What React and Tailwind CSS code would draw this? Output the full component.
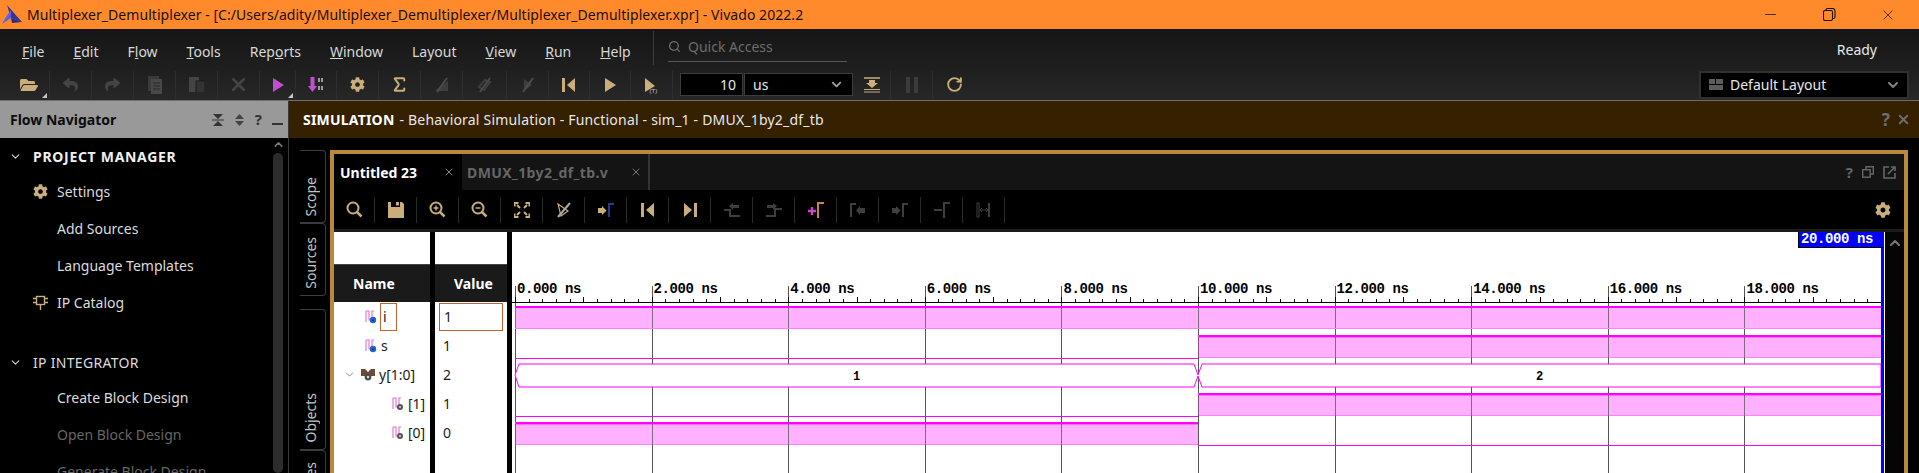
import React from 'react';
import { FaCog, FaFolderOpen, FaReply, FaShare } from 'react-icons/fa';
import { X, ChevronDown, ChevronUp, Sigma, RotateCw, Search, Minus } from 'lucide-react';

const TAN = '#c9ae7c';
const DIM = '#444444';

const NS = 68.3;
const X0 = 3; // 0 ns inside the wave svg
const xAt = ns => X0 + ns * NS;

/* ---------- toolbar drawings ---------- */

const Tri = ({ dir = 'right', color = TAN, size = 16 }) => (
  <svg width={size} height={size} viewBox="0 0 16 16">
    <polygon points={dir === 'right' ? '3,1 14,8 3,15' : '13,1 2,8 13,15'} fill={color} />
  </svg>
);

const StepBack = ({ color = TAN }) => (
  <svg width="16" height="16" viewBox="0 0 16 16">
    <rect x="1" y="1" width="3" height="14" fill={color} />
    <polygon points="14,1 6,8 14,15" fill={color} />
  </svg>
);

const StepNext = ({ color = TAN }) => (
  <svg width="16" height="16" viewBox="0 0 16 16">
    <polygon points="2,1 10,8 2,15" fill={color} />
    <rect x="12" y="1" width="3" height="14" fill={color} />
  </svg>
);

const CopyIcon = () => (
  <svg width="16" height="18" viewBox="0 0 16 18">
    <rect x="1" y="0" width="11" height="15" fill="#3a3a3a" />
    <rect x="4" y="3" width="11" height="15" fill="#484848" />
    <path d="M6 7h7M6 10h7M6 13h7" stroke="#2a2a2a" />
  </svg>
);

const PasteIcon = () => (
  <svg width="16" height="16" viewBox="0 0 16 16">
    <rect x="0" y="0" width="10" height="15" fill="#444" />
    <rect x="7" y="4" width="9" height="12" fill="#333" stroke="#1c1c1c" />
  </svg>
);

const DownBits = () => (
  <svg width="16" height="16" viewBox="0 0 16 16">
    <rect x="2.5" y="0" width="4" height="9" fill="#c04fd0" />
    <polygon points="0,9 9,9 4.5,15" fill="#c04fd0" />
    <path d="M11 1v4M14 1v4M11 9v4M14 9v4" stroke="#9a9a9a" strokeWidth="2" />
  </svg>
);

const Slashed = ({ kind = 'a' }) => (
  <svg width="18" height="18" viewBox="0 0 18 18">
    {kind === 'a' && <polygon points="2,15 15,15 15,5" fill="#3e3e3e" />}
    {kind === 'b' && <path d="M3 11l6-7 5 2-6 8z" fill="none" stroke="#3e3e3e" strokeWidth="2" />}
    {kind === 'c' && <path d="M5 3l8 6-8 6z" fill="#3e3e3e" />}
    <path d="M14 2L4 16" stroke="#4c4c4c" strokeWidth="2" />
  </svg>
);

const PlayTimed = () => (
  <div className="relative w-[16px] h-[16px]">
    <svg width="12" height="16" viewBox="0 0 12 16">
      <polygon points="1,1 11,9 1,15" fill={TAN} />
    </svg>
    <span className="absolute left-[6px] top-[10px] text-[6px] leading-[8px] text-[#c8c8c8] font-['Liberation_Sans',sans-serif]">(T)</span>
  </div>
);

const LoadIcon = () => (
  <svg width="16" height="16" viewBox="0 0 16 16">
    <path d="M0 1h16" stroke={TAN} strokeWidth="1.5" />
    <polygon points="5,3 11,3 11,6 14,6 8,11 2,6 5,6" fill={TAN} />
    <path d="M0 12.5h16M0 15h16" stroke={TAN} strokeWidth="1.2" />
  </svg>
);

const PauseIcon = () => (
  <svg width="12" height="16" viewBox="0 0 12 16">
    <rect x="0" y="0" width="4" height="16" fill="#3c3c3c" />
    <rect x="8" y="0" width="4" height="16" fill="#3c3c3c" />
  </svg>
);

const Corner = ({ children }) => (
  <div className="relative w-full h-full flex items-center justify-center">
    {children}
    <span className="absolute right-[2px] bottom-[1px] w-0 h-0 border-l-[5px] border-l-transparent border-b-[5px] border-b-[#c8c8c8]" />
  </div>
);

/* wave toolbar drawings */

const Magnifier = ({ mark }) => (
  <svg width="17" height="17" viewBox="0 0 17 17" fill="none" stroke={TAN}>
    <circle cx="7" cy="7" r="5.5" strokeWidth="2" />
    <path d="M11 11l4.5 4.5" strokeWidth="2.5" />
    {mark && <path d="M4.5 7h5" strokeWidth="1.5" />}
    {mark === 'plus' && <path d="M7 4.5v5" strokeWidth="1.5" />}
  </svg>
);

const SaveIcon = () => (
  <svg width="16" height="16" viewBox="0 0 16 16">
    <path d="M0 0h3v5h9V0h2l2 2v14H0z" fill={TAN} />
    <rect x="8" y="0" width="3" height="3.5" fill={TAN} />
  </svg>
);

const FitIcon = () => (
  <svg width="16" height="16" viewBox="0 0 16 16" fill="none" stroke={TAN} strokeWidth="2">
    <path d="M0.5 4.5V1h4M15.5 4.5V1h-4M0.5 11.5V15h4M15.5 11.5V15h-4" />
    <path d="M3 3l3 3M13 3l-3 3M3 13l3-3M13 13l-3-3" />
  </svg>
);

const CursorSlash = () => (
  <svg width="16" height="16" viewBox="0 0 16 16">
    <path d="M2 2l10 7-7 5z" fill="none" stroke={TAN} strokeWidth="1.2" />
    <path d="M14 1L2 15" stroke="#aaaaaa" strokeWidth="2" />
  </svg>
);

// arrow running into a rising edge; flip puts the edge first
const EdgeArrow = ({ color = TAN, bar = '#1f3a93', flip }) => (
  <svg width="16" height="14" viewBox="0 0 16 14">
    {flip ? (
      <>
        <path d="M1 14V1h5" fill="none" stroke={bar} strokeWidth="2" />
        <polygon points="6,7.5 10,3 10,5 15,5 15,10 10,10 10,12" fill={color} />
      </>
    ) : (
      <>
        <path d="M11 14V1h5" fill="none" stroke={bar} strokeWidth="2" />
        <polygon points="0,5 4,5 4,3 8.5,7.5 4,12 4,10 0,10" fill={color} />
      </>
    )}
  </svg>
);

const TransLeft = () => (
  <svg width="16" height="14" viewBox="0 0 16 14">
    <path d="M0 7h6v6h10" fill="none" stroke="#3e3e3e" strokeWidth="2" />
    <polygon points="5,3 9,0 9,2 15,2 15,5 9,5 9,7" fill="#3e3e3e" />
  </svg>
);

const TransRight = () => (
  <svg width="16" height="14" viewBox="0 0 16 14">
    <path d="M0 13h9V6h7" fill="none" stroke="#3e3e3e" strokeWidth="2" />
    <polygon points="11,3 7,0 7,2 1,2 1,5 7,5 7,7" fill="#3e3e3e" />
  </svg>
);

const AddMarker = () => (
  <svg width="16" height="16" viewBox="0 0 16 16">
    <path d="M0 9h8M4 5v8" stroke="#cc44cc" strokeWidth="2.4" />
    <path d="M10 16V1h6" fill="none" stroke="#c9824c" strokeWidth="2" />
  </svg>
);

const DashMarker = () => (
  <svg width="16" height="16" viewBox="0 0 16 16">
    <path d="M10 16V1h6" fill="none" stroke="#3e3e3e" strokeWidth="2" />
    <path d="M0 8h8" stroke="#3e3e3e" strokeWidth="2" />
  </svg>
);

const SwapMarker = () => (
  <svg width="16" height="16" viewBox="0 0 16 16" fill="none" stroke="#3e3e3e">
    <rect x="1" y="1" width="2" height="14" />
    <path d="M13 1v14" strokeWidth="2" />
    <path d="M4 8h8" />
    <path d="M6 6L4 8l2 2M10 6l2 2-2 2" />
  </svg>
);

/* signal icons in the name column */

const SignalIcon = ({ dot = '#2563c9', small }) => (
  <svg width="12" height="14" viewBox="0 0 12 14" className="shrink-0">
    <path d="M1 12V1M1 1h3v9h3V1h2" fill="none" stroke="#e070c8" strokeWidth="1.1" />
    <circle cx="8" cy="10" r={small ? 3 : 3.2} fill={dot} />
    {!small && <path d="M7 9.5l1 1.5 1-1.5" stroke="#0b2a66" fill="none" strokeWidth="0.8" />}
    {small && <circle cx="8" cy="10" r="1" fill="#dddddd" />}
  </svg>
);

const BusIcon = () => (
  <svg width="14" height="14" viewBox="0 0 14 14" className="shrink-0">
    <polygon points="0,1 4,1 7,4 10,1 14,1 14,8 0,8" fill="#6b4a38" />
    <circle cx="7" cy="9" r="3.4" fill="#4c4c4c" />
    <circle cx="7" cy="9" r="1.2" fill="#dddddd" />
  </svg>
);

const Logo = () => (
  <svg width="20" height="20" viewBox="0 0 20 20">
    <polygon points="5,0 12,8 20,17 9,13" fill="#3a3196" />
    <polygon points="9,5 9,13 0,19 4,12" fill="#5b5fe0" />
    <polygon points="9,13 20,17 10,18" fill="#2a2a86" />
  </svg>
);

const GearIcon = ({ size = 15 }) => <FaCog size={size} color={TAN} />;

const IpIcon = () => (
  <svg width="15" height="15" viewBox="0 0 15 15" fill="none" stroke={TAN} strokeWidth="1.4">
    <rect x="3.5" y="1.5" width="8" height="8" />
    <path d="M0 3.5h3.5M0 7.5h3.5M11.5 3.5H15M11.5 7.5H15M7.5 9.5V15" />
  </svg>
);

/* ---------- data ---------- */

const MENU = [
  ['F', 'ile'], ['E', 'dit'], ['Fl', 'ow', 1], ['T', 'ools'], ['Rep', 'orts', 2], ['W', 'indow'],
  ['', 'Layout'], ['V', 'iew'], ['R', 'un'], ['H', 'elp'],
];

const MAIN_TOOLS = [
  { w: 'w-[42px]', el: <Corner><FaFolderOpen size={18} color={TAN} /></Corner> },
  { w: 'w-[42px]', el: <FaReply size={15} color={DIM} /> },
  { w: 'w-[42px]', el: <FaShare size={15} color={DIM} /> },
  { w: 'w-[42px]', el: <CopyIcon /> },
  { w: 'w-[42px]', el: <PasteIcon /> },
  { w: 'w-[42px]', el: <X size={21} color={DIM} strokeWidth={3} /> },
  { w: 'w-[36px]', el: <Corner><Tri color="#c04fd0" /></Corner> },
  { w: 'w-[41px]', el: <DownBits /> },
  { w: 'w-[42px]', el: <FaCog size={15} color={TAN} /> },
  { w: 'w-[42px]', el: <Sigma size={19} color={TAN} strokeWidth={2.5} /> },
  { w: 'w-[42px]', el: <Slashed kind="a" /> },
  { w: 'w-[44px]', el: <Slashed kind="b" /> },
  { w: 'w-[42px]', el: <Slashed kind="c" /> },
  { w: 'w-[41px]', el: <StepBack /> },
  { w: 'w-[41px]', el: <Tri /> },
  { w: 'w-[42px]', el: <PlayTimed /> },
];

const WAVE_TOOLS = [
  <Magnifier />, <SaveIcon />, <Magnifier mark="plus" />, <Magnifier mark="minus" />, <FitIcon />, <CursorSlash />,
  <EdgeArrow />, <StepBack />, <StepNext />, <TransLeft />, <TransRight />, <AddMarker />,
  <EdgeArrow color="#3e3e3e" bar="#3e3e3e" flip />, <EdgeArrow color="#3e3e3e" bar="#3e3e3e" />, <DashMarker />, <SwapMarker />,
];

const NAV = [
  { label: 'PROJECT MANAGER', head: true, bold: true },
  { label: 'Settings', icon: <GearIcon /> },
  { label: 'Add Sources' },
  { label: 'Language Templates' },
  { label: 'IP Catalog', icon: <IpIcon /> },
  { spacer: true },
  { label: 'IP INTEGRATOR', head: true },
  { label: 'Create Block Design' },
  { label: 'Open Block Design', off: true },
  { label: 'Generate Block Design', off: true },
];

const SIDE_TABS = [
  { label: 'Scope', box: 'h-[73px]' },
  { label: 'Sources', box: 'h-[73px]' },
  { label: 'Objects', box: 'h-[141px] mt-[13px]' },
  { label: 'Protocol Instances', box: 'h-[140px]' },
];

const ROWS = [
  { name: 'i', value: '1', pad: 'pl-[31px]', icon: <SignalIcon />, selected: true },
  { name: 's', value: '1', pad: 'pl-[31px]', icon: <SignalIcon /> },
  { name: 'y[1:0]', value: '2', pad: 'pl-[9px]', chevron: true, icon: <BusIcon /> },
  { name: '[1]', value: '1', pad: 'pl-[58px]', icon: <SignalIcon small dot="#555555" /> },
  { name: '[0]', value: '0', pad: 'pl-[58px]', icon: <SignalIcon small dot="#555555" /> },
];

/* ---------- wave chart ---------- */

const WaveHigh = ({ x1, x2, y }) => (
  <g>
    <rect x={x1} y={y} width={x2 - x1} height={23} fill="#ffb0ff" />
    <rect x={x1} y={y} width={x2 - x1} height={2} fill="#ff00ff" />
    <rect x={x1} y={y + 2} width={x2 - x1} height={1} fill="#ff70ff" />
    <rect x={x1} y={y + 22} width={x2 - x1} height={1} fill="#ff80ff" />
    <rect x={x1} y={y} width={1} height={23} fill="#ff40ff" />
  </g>
);

const Wave = () => {
  const W = 1373;
  const ticks = [];
  for (let i = 0; i <= 100; i++) {
    const x = Math.round(X0 + i * 13.66) + 0.5;
    ticks.push(<path key={i} d={`M${x} 70V${i % 5 === 0 ? 65 : 67}`} stroke="#000" />);
  }
  const labels = [0, 2, 4, 6, 8, 10, 12, 14, 16, 18];
  const mid = xAt(10);
  const end = xAt(20);
  return (
    <svg width={W} height={241} viewBox={`0 0 ${W} 241`} shapeRendering="crispEdges" className="block bg-white">
      {/* grid */}
      {labels.map(n => (
        <path key={n} d={`M${Math.round(xAt(n)) + 0.5} 54V241`} stroke="#555555" />
      ))}
      <path d={`M0 70.5H${end}`} stroke="#000" />
      {ticks}

      {/* i */}
      <g opacity="1">
        <rect x={X0} y={74} width={end - X0} height={23} fill="#ffb0ff" />
        <rect x={X0} y={74} width={end - X0} height={2} fill="#ff00ff" />
        <rect x={X0} y={96} width={end - X0} height={1} fill="#ff80ff" />
      </g>
      {/* s */}
      <path d={`M${X0} 126.5H${mid}`} stroke="#ff00ff" />
      <WaveHigh x1={mid} x2={end} y={103} />
      {/* y[1:0] bus */}
      <polygon
        points={`${X0},143 ${X0 + 4},132 ${mid - 4},132 ${mid},143 ${mid + 4},132 ${end},132 ${end},155 ${mid + 4},155 ${mid},144 ${mid - 4},155 ${X0 + 4},155`}
        fill="#fff"
        stroke="#ff00ff"
        shapeRendering="auto"
      />
      {/* y[1] */}
      <path d={`M${X0} 184.5H${mid}`} stroke="#ff00ff" />
      <WaveHigh x1={mid} x2={end} y={161} />
      {/* y[0] */}
      <WaveHigh x1={X0} x2={mid} y={190} />
      <path d={`M${mid} 213.5H${end}`} stroke="#ff00ff" />

      {/* grid over the filled waves */}
      {labels.map(n => (
        <g key={n} opacity="0.75">
          <path d={`M${Math.round(xAt(n)) + 0.5} 76V96`} stroke="#555555" />
          {n >= 10 && <path d={`M${Math.round(xAt(n)) + 0.5} 105V126`} stroke="#555555" />}
          {n >= 10 && <path d={`M${Math.round(xAt(n)) + 0.5} 163V184`} stroke="#555555" />}
          {n < 10 && <path d={`M${Math.round(xAt(n)) + 0.5} 192V213`} stroke="#555555" />}
        </g>
      ))}

      <g className="font-['Liberation_Mono',monospace] font-bold" shapeRendering="auto">
        {labels.map(n => (
          <text key={n} x={xAt(n) + 2} y={61} fontSize="14" letterSpacing="-0.4" fill="#000">
            {n.toFixed(3)} ns
          </text>
        ))}
        <text x={xAt(5)} y={148} fontSize="12" textAnchor="middle" fill="#000">1</text>
        <text x={xAt(15)} y={148} fontSize="12" textAnchor="middle" fill="#000">2</text>
      </g>

      {/* end-of-time cursor */}
      <rect x={end} y={0} width={3} height={241} fill="#0000ff" />
    </svg>
  );
};

/* ---------- app ---------- */

const App = () => {
  return (
    <div className="w-[1919px] h-[473px] overflow-hidden bg-black flex flex-col text-[#e8e8e8] font-['Noto_Sans','Open_Sans',sans-serif]">

      {/* Title bar */}
      <div className="h-[29px] shrink-0 bg-[#ff8a2c] flex items-center pl-[2px] text-[#1a0f05]">
        <Logo />
        <span className="ml-[5px] text-[14px] tracking-[0.05px] whitespace-nowrap">
          Multiplexer_Demultiplexer - [C:/Users/adity/Multiplexer_Demultiplexer/Multiplexer_Demultiplexer.xpr] - Vivado 2022.2
        </span>
        <div className="ml-auto flex items-center gap-[44px] pr-[23px]">
          <Minus size={17} strokeWidth={1.1} color="#1a0f05" />
          <svg width="13" height="13" viewBox="0 0 13 13" fill="none" stroke="#1a0f05" strokeWidth="1.1">
            <rect x="0.5" y="2.5" width="9" height="10" rx="1.5" />
            <path d="M3 2.5V2a1.5 1.5 0 0 1 1.5-1.5h5A2.5 2.5 0 0 1 12 3v6a1.5 1.5 0 0 1-1.5 1.5H9.5" />
          </svg>
          <X size={16} strokeWidth={1.1} color="#1a0f05" />
        </div>
      </div>

      {/* Menu + toolbar */}
      <div className="h-[71px] shrink-0 bg-gradient-to-b from-[#151515] to-[#272727] flex flex-col">
        <div className="h-[41px] flex items-center pl-[22px] text-[14px] text-[#d8d8d8]">
          <div className="flex gap-[29px] w-[631px] pt-[3px]">
            {MENU.map(([a, b, under]) => (
              <span key={a + b}>
                {under === 1 ? <>F<span className="underline">l</span>{b}</>
                  : under === 2 ? <>Rep<span className="underline">o</span>rts</>
                  : <><span className="underline">{a}</span>{b}</>}
              </span>
            ))}
          </div>
          <div className="w-px h-[34px] mt-[-4px] bg-[#3c3c3c]" />
          <div className="ml-[14px] w-[179px] h-[30px] mt-[-5px] border-b border-[#555] flex items-center gap-[7px] text-[#6c6c6c]">
            <Search size={13} color="#6c6c6c" strokeWidth={2.4} />
            <span>Quick Access</span>
          </div>
          <span className="ml-auto mr-[42px] text-[#e8e8e8]">Ready</span>
        </div>
        <div className="h-[29px] flex items-center pl-[8px]">
          {MAIN_TOOLS.map((t, i) => (
            <div key={i} className={`${t.w} h-[28px] flex items-center justify-center border-r border-[#2e2e2e]`}>{t.el}</div>
          ))}
          <div className="ml-[7px] w-[63px] h-[23px] bg-black border border-[#3c3c3c] text-right pr-[6px] text-[14px] leading-[21px] text-[#e8e8e8]">10</div>
          <div className="ml-[1px] w-[109px] h-[23px] bg-black border border-[#3c3c3c] flex items-center justify-between px-[8px] text-[14px]">
            <span>us</span>
            <ChevronDown size={15} strokeWidth={3} color="#a0a0a0" />
          </div>
          <div className="w-[38px] h-[28px] flex items-center justify-center border-r border-[#2e2e2e]"><LoadIcon /></div>
          <div className="w-[42px] h-[28px] flex items-center justify-center border-r border-[#2e2e2e]"><PauseIcon /></div>
          <div className="w-[42px] h-[28px] flex items-center justify-center"><RotateCw size={17} strokeWidth={2.6} color={TAN} /></div>
          <div className="ml-auto mr-[10px] w-[210px] h-[28px] bg-black border-2 border-[#303030] flex items-center pl-[8px] pr-[6px] text-[14px] text-[#e8e8e8]">
            <svg width="14" height="11" viewBox="0 0 14 11" fill="#5c5c5c">
              <rect x="0" y="0" width="6" height="5" />
              <rect x="7" y="0" width="7" height="5" />
              <rect x="0" y="6" width="14" height="5" />
            </svg>
            <span className="ml-[7px]">Default Layout</span>
            <ChevronDown size={16} strokeWidth={3} color="#808080" className="ml-auto" />
          </div>
        </div>
      </div>

      {/* Body */}
      <div className="flex-1 min-h-0 flex border-t border-[#6e6e6e]">

        {/* Flow Navigator */}
        <div className="w-[289px] shrink-0 flex flex-col border-r border-[#3a3a3a]">
          <div className="h-[37px] shrink-0 bg-[#999999] flex items-center pl-[10px] text-[#0c0c0c]">
            <span className="font-bold text-[14px]">Flow Navigator</span>
            <div className="ml-auto flex items-center gap-[10px] pr-[5px] text-[#333]">
              <svg width="12" height="12" viewBox="0 0 12 12" fill="#333"><path d="M1 0h10L6 5zM1 12h10L6 7z" /><path d="M0 5.5h12v1H0z" /></svg>
              <svg width="11" height="12" viewBox="0 0 11 12" fill="#444"><path d="M5.5 0L10 5H1zM5.5 12L1 7h9z" /></svg>
              <span className="font-bold text-[15px] leading-none">?</span>
              <span className="w-[11px] h-[2px] mt-[8px] bg-[#333]" />
            </div>
          </div>
          <div className="flex-1 min-h-0 flex bg-black overflow-hidden">
            <div className="w-[272px] shrink-0 pt-[2px] text-[14px]">
              {NAV.map((n, i) => n.spacer ? (
                <div key={i} className="h-[25px]" />
              ) : (
                <div key={i} className={`flex items-center whitespace-nowrap ${n.head ? 'h-[33px] pl-[9px]' : 'h-[37px] pl-[33px]'}`}>
                  {n.head && <ChevronDown size={13} strokeWidth={2.2} color="#cccccc" className="mr-[11px]" />}
                  {!n.head && <span className="w-[24px] shrink-0 flex">{n.icon}</span>}
                  <span className={n.bold ? 'font-bold tracking-[0.7px] text-[#f0f0f0]' : n.head ? 'tracking-[0.3px] text-[#dcdcdc]' : n.off ? 'text-[#666666]' : 'text-[#dcdcdc]'}>{n.label}</span>
                </div>
              ))}
            </div>
            <div className="w-[12px] shrink-0 flex flex-col items-center">
              <ChevronUp size={13} strokeWidth={3} color="#777" />
              <div className="w-[10px] h-[320px] mt-[2px] rounded-full bg-[#2c2c2c]" />
            </div>
          </div>
        </div>

        {/* Simulation */}
        <div className="flex-1 min-w-0 flex flex-col">
          <div className="h-[37px] shrink-0 bg-[#352000] flex items-center pl-[14px] pr-[8px] text-[14px] tracking-[0.2px] text-[#e8e8e8]">
            <span className="font-bold text-white">SIMULATION</span>
            <span className="ml-[5px]">- Behavioral Simulation - Functional - sim_1 - DMUX_1by2_df_tb</span>
            <span className="ml-auto font-bold text-[17px] leading-none text-[#6e6e6e]">?</span>
            <X size={15} strokeWidth={3} color="#6e6e6e" className="ml-[6px]" />
          </div>

          <div className="flex-1 min-h-0 flex pt-[12px] pr-[11px] pl-[11px] bg-black">
            {/* Side tabs */}
            <div className="w-[30px] shrink-0 flex flex-col">
              {SIDE_TABS.map(t => (
                <div key={t.label} className={`${t.box} shrink-0 w-[26px] border border-l-0 border-[#3c3c3c] rounded-r-[4px] flex items-end justify-center pb-[6px]`}>
                  <span className="[writing-mode:vertical-rl] rotate-180 whitespace-nowrap text-[14px] text-[#c4c4c4] mr-[4px]">{t.label}</span>
                </div>
              ))}
            </div>

            {/* Wave window */}
            <div className="flex-1 min-w-0 h-[340px] border-4 border-[#b8893a] flex flex-col">
              <div className="h-[36px] shrink-0 bg-[#141414] flex">
                <div className="w-[128px] bg-black flex items-center pl-[6px] pr-[7px] justify-between">
                  <span className="font-bold text-[14px] text-white">Untitled 23</span>
                  <X size={12} strokeWidth={2} color="#888" />
                </div>
                <div className="w-[188px] flex items-center justify-between pl-[5px] pr-[6px] border-r-2 border-[#333]">
                  <span className="font-bold text-[14px] tracking-[0.4px] text-[#666]">DMUX_1by2_df_tb.v</span>
                  <X size={12} strokeWidth={2} color="#777" />
                </div>
                <div className="ml-auto flex items-center gap-[9px] pr-[8px]">
                  <span className="font-bold text-[15px] leading-none text-[#666]">?</span>
                  <svg width="12" height="12" viewBox="0 0 12 12" fill="none" stroke="#666" strokeWidth="1.4">
                    <rect x="0.7" y="3.7" width="7.5" height="7.5" />
                    <path d="M4 3.5V0.7h7.3V8H8.5" />
                  </svg>
                  <svg width="13" height="13" viewBox="0 0 13 13" fill="none" stroke="#666" strokeWidth="1.6">
                    <path d="M6 1H1v11h11V7" />
                    <path d="M5 8l7-7M8 1h4v4" />
                  </svg>
                </div>
              </div>

              <div className="h-[39px] shrink-0 bg-black flex items-center">
                {WAVE_TOOLS.map((el, i) => (
                  <div key={i} className="w-[42px] h-[26px] flex items-center justify-center border-r border-[#2a2a2a] first:w-[41px]">{el}</div>
                ))}
                <div className="ml-auto mr-[13px]"><GearIcon size={16} /></div>
              </div>

              <div className="h-[3px] shrink-0 bg-[#1c1c1c]" />

              {/* Panes */}
              <div className="flex-1 min-h-0 flex bg-black overflow-hidden">
                <div className="w-[96px] shrink-0 bg-white flex flex-col">
                  <div className="h-[32px] shrink-0" />
                  <div className="h-[38px] shrink-0 bg-[#1a1a1a] border-t border-[#444] flex items-center pl-[19px] font-bold text-[14px] text-white">Name</div>
                  {ROWS.map(r => (
                    <div key={r.name} className={`h-[29px] shrink-0 flex items-center text-[14px] text-[#1a1a1a] whitespace-nowrap ${r.pad}`}>
                      {r.chevron && <ChevronDown size={13} strokeWidth={1.4} color="#666" className="mr-[5px]" />}
                      {r.icon}
                      {r.selected
                        ? <span className="ml-[3px] w-[17px] h-[28px] border border-[#c0622a] pl-[2px] leading-[26px]">{r.name}</span>
                        : <span className="ml-[4px]">{r.name}</span>}
                    </div>
                  ))}
                </div>
                <div className="w-[72px] ml-[5px] shrink-0 bg-white flex flex-col">
                  <div className="h-[32px] shrink-0" />
                  <div className="h-[38px] shrink-0 bg-[#1a1a1a] border-t border-[#444] flex items-center pl-[19px] font-bold text-[14px] text-white">Value</div>
                  {ROWS.map(r => (
                    <div key={r.name} className="h-[29px] shrink-0 flex items-center pl-[4px] text-[14px] text-[#1a1a1a]">
                      {r.selected
                        ? <span className="w-[64px] h-[28px] border border-[#c0622a] pl-[4px] leading-[26px]">{r.value}</span>
                        : <span className="pl-[4px]">{r.value}</span>}
                    </div>
                  ))}
                </div>
                <div className="w-[1373px] ml-[5px] shrink-0 relative">
                  <Wave />
                  <div className="absolute right-[1px] top-0 w-[86px] h-[16px] bg-[#0000ff] border-l border-b border-black text-white font-['Liberation_Mono',monospace] font-bold text-[14px] leading-[15px] pl-[2px] tracking-[-0.4px]">20.000 ns</div>
                </div>
                <div className="flex-1 min-w-0 bg-[#050505] flex justify-center pt-[3px]">
                  <ChevronUp size={16} strokeWidth={3} color="#777" />
                </div>
              </div>
            </div>
          </div>
        </div>
      </div>
    </div>
  );
};

export default App;
